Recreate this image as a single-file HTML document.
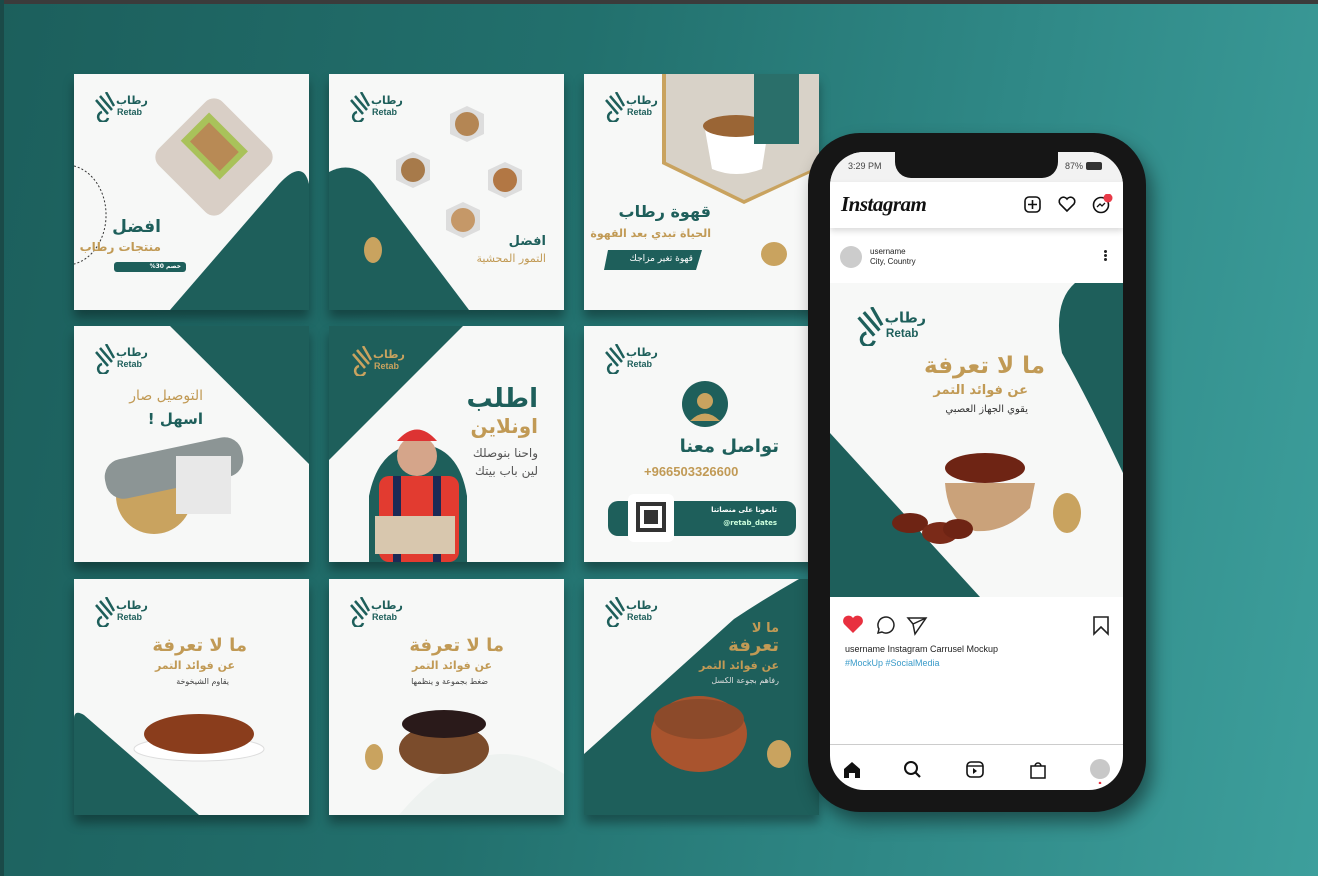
<!DOCTYPE html>
<html><head><meta charset="utf-8"><style>
*{margin:0;padding:0;box-sizing:border-box}
body{width:1318px;height:876px;overflow:hidden;position:relative;background:linear-gradient(100deg,#1c5f5c 0%,#22706d 40%,#2f8886 70%,#3d9f9c 100%);font-family:"Liberation Sans",sans-serif}
.top{position:absolute;left:0;top:0;width:1318px;height:4px;background:#3b3b3b}
.lft{position:absolute;left:0;top:0;width:4px;height:876px;background:#1a4a48}
.card{position:absolute;width:235px;height:236px;background:#f7f8f7;overflow:hidden;box-shadow:0 8px 10px rgba(0,0,0,.35)}
.card svg.bg{position:absolute;left:0;top:0}
.ar{position:absolute;font-family:"DejaVu Sans",sans-serif;direction:rtl;white-space:nowrap;font-weight:bold}
.g{color:#c19a55}.t{color:#1e5f5b}
.logo{position:absolute;width:50px;height:30px}
.logo .r{position:absolute;left:22px;top:2px;font:bold 11px "DejaVu Sans",sans-serif}
.logo .e{position:absolute;left:23px;top:15px;font:bold 9px "Liberation Sans",sans-serif}
</style></head><body>
<div class="top"></div><div class="lft"></div>

<!-- card1 -->
<div class="card" style="left:74px;top:74px">
<svg class="bg" width="235" height="236"><path d="M96,236 L205,110 Q229,84 235,110 L235,236Z" fill="#1e5f5b"/>
<path d="M0,92 A40,50 0 0 1 0,190" fill="none" stroke="#333" stroke-width="1" stroke-dasharray="2 2"/>
<g transform="rotate(45 140 83)"><rect x="95" y="38" width="90" height="90" rx="12" fill="#d9cfc6"/><rect x="105" y="55" width="55" height="40" fill="#a9c25a"/><rect x="112" y="62" width="42" height="27" fill="#b88a55"/></g>
<rect x="40" y="188" width="72" height="10" rx="3" fill="#1e5f5b"/></svg>
<div class="logo t" style="left:20px;top:18px"><svg width="24" height="30"><path d="M2,8 L14,22 M6,4 L18,18 M12,0 L20,14 M8,20 a5,5 0 1 0 6,6" stroke="#1e5f5b" stroke-width="2.5" fill="none"/></svg><span class="r">رطاب</span><span class="e">Retab</span></div>
<div class="ar t" style="right:148px;top:143px;font-size:17px">افضل</div>
<div class="ar g" style="right:148px;top:166px;font-size:12px">منتجات رطاب</div>
<div class="ar" style="right:128px;top:189px;font-size:6px;color:#fff">خصم 30%</div>
</div>

<!-- card2 -->
<div class="card" style="left:329px;top:74px">
<svg class="bg" width="235" height="236"><path d="M0,98 Q25,85 45,110 L140,236 L0,236Z" fill="#1e5f5b"/>
<ellipse cx="44" cy="176" rx="9" ry="13" fill="#c9a35f"/>
<polygon points="138,32 155,40 155,60 138,68 121,60 121,40" fill="#ddd"/><circle cx="138" cy="50" r="12" fill="#b48654"/>
<polygon points="84,78 101,86 101,106 84,114 67,106 67,86" fill="#ddd"/><circle cx="84" cy="96" r="12" fill="#a77a4a"/>
<polygon points="176,88 193,96 193,116 176,124 159,116 159,96" fill="#ddd"/><circle cx="176" cy="106" r="12" fill="#b27744"/>
<polygon points="134,128 151,136 151,156 134,164 117,156 117,136" fill="#ddd"/><circle cx="134" cy="146" r="12" fill="#c59868"/></svg>
<div class="logo t" style="left:20px;top:18px"><svg width="24" height="30"><path d="M2,8 L14,22 M6,4 L18,18 M12,0 L20,14 M8,20 a5,5 0 1 0 6,6" stroke="#1e5f5b" stroke-width="2.5" fill="none"/></svg><span class="r">رطاب</span><span class="e">Retab</span></div>
<div class="ar t" style="right:18px;top:160px;font-size:13px">افضل</div>
<div class="ar g" style="right:18px;top:178px;font-size:11px;font-weight:normal">التمور المحشية</div>
</div>

<!-- card3 -->
<div class="card" style="left:584px;top:74px">
<svg class="bg" width="235" height="236"><path d="M78,0 L235,0 L235,95 L160,130 L78,90Z" fill="#c9a35f"/><path d="M82,0 L235,0 L235,92 L160,126 L82,88Z" fill="#d8d2c8"/>
<path d="M120,50 L185,50 L178,95 Q152,105 128,95Z" fill="#fff"/><ellipse cx="152" cy="52" rx="33" ry="11" fill="#9a6535"/>
<rect x="170" y="0" width="45" height="70" fill="#2a6f6a"/>
<path d="M24,176 L118,176 L112,196 L20,196Z" fill="#1e5f5b"/><ellipse cx="190" cy="180" rx="13" ry="12" fill="#c9a35f"/></svg>
<div class="logo t" style="left:20px;top:18px"><svg width="24" height="30"><path d="M2,8 L14,22 M6,4 L18,18 M12,0 L20,14 M8,20 a5,5 0 1 0 6,6" stroke="#1e5f5b" stroke-width="2.5" fill="none"/></svg><span class="r">رطاب</span><span class="e">Retab</span></div>
<div class="ar t" style="right:108px;top:128px;font-size:16px">قهوة رطاب</div>
<div class="ar g" style="right:108px;top:153px;font-size:11px">الحياة تبدي بعد القهوة</div>
<div class="ar" style="right:126px;top:180px;font-size:9px;color:#fff;font-weight:normal">قهوة تغير مزاجك</div>
</div>

<!-- card4 -->
<div class="card" style="left:74px;top:326px">
<svg class="bg" width="235" height="236"><path d="M96,0 L235,0 L235,138 Z" fill="#1e5f5b"/>
<circle cx="80" cy="170" r="38" fill="#c9a35f"/><rect x="30" y="122" width="140" height="40" rx="18" fill="#8c9595" transform="rotate(-12 100 142)"/><rect x="102" y="130" width="55" height="58" fill="#e8e8e8"/></svg>
<div class="logo t" style="left:20px;top:18px"><svg width="24" height="30"><path d="M2,8 L14,22 M6,4 L18,18 M12,0 L20,14 M8,20 a5,5 0 1 0 6,6" stroke="#1e5f5b" stroke-width="2.5" fill="none"/></svg><span class="r">رطاب</span><span class="e">Retab</span></div>
<div class="ar g" style="right:106px;top:62px;font-size:14px;font-weight:normal">التوصيل صار</div>
<div class="ar t" style="right:106px;top:84px;font-size:15px">اسهل !</div>
</div>

<!-- card5 -->
<div class="card" style="left:329px;top:326px">
<svg class="bg" width="235" height="236"><path d="M0,0 L134,0 L0,134Z" fill="#1e5f5b"/><path d="M40,236 L40,170 Q50,120 90,118 Q130,120 138,170 L138,236Z" fill="#1e5f5b"/>
<rect x="50" y="150" width="80" height="86" rx="10" fill="#e23b30"/><circle cx="88" cy="130" r="20" fill="#d5a58a"/><path d="M68,115 Q88,92 108,115Z" fill="#d33"/>
<rect x="64" y="150" width="8" height="86" fill="#1c2a55"/><rect x="104" y="150" width="8" height="86" fill="#1c2a55"/>
<rect x="46" y="190" width="80" height="38" fill="#d8c7ae"/></svg>
<div class="logo" style="left:22px;top:20px;color:#c9a35f"><svg width="24" height="30"><path d="M2,8 L14,22 M6,4 L18,18 M12,0 L20,14 M8,20 a5,5 0 1 0 6,6" stroke="#c9a35f" stroke-width="2.5" fill="none"/></svg><span class="r">رطاب</span><span class="e">Retab</span></div>
<div class="ar t" style="right:26px;top:58px;font-size:26px">اطلب</div>
<div class="ar g" style="right:26px;top:88px;font-size:20px">اونلاين</div>
<div class="ar" style="right:26px;top:120px;font-size:12px;color:#555;font-weight:normal">واحنا بنوصلك</div>
<div class="ar" style="right:26px;top:138px;font-size:12px;color:#555;font-weight:normal">لين باب بيتك</div>
</div>

<!-- card6 -->
<div class="card" style="left:584px;top:326px">
<svg class="bg" width="235" height="236"><circle cx="121" cy="78" r="23" fill="#1e5f5b"/><circle cx="121" cy="75" r="8" fill="#c9a35f"/><path d="M106,95 Q121,80 136,95Z" fill="#c9a35f"/>
<rect x="24" y="175" width="188" height="35" rx="10" fill="#1e5f5b"/><rect x="44" y="168" width="46" height="48" rx="6" fill="#fff"/><rect x="52" y="176" width="30" height="30" fill="#333"/><rect x="56" y="180" width="22" height="22" fill="#fff"/><rect x="60" y="184" width="14" height="14" fill="#333"/></svg>
<div class="logo t" style="left:20px;top:18px"><svg width="24" height="30"><path d="M2,8 L14,22 M6,4 L18,18 M12,0 L20,14 M8,20 a5,5 0 1 0 6,6" stroke="#1e5f5b" stroke-width="2.5" fill="none"/></svg><span class="r">رطاب</span><span class="e">Retab</span></div>
<div class="ar t" style="right:40px;top:110px;font-size:18px">تواصل معنا</div>
<div class="ar g" style="left:60px;top:138px;font-size:13px;direction:ltr;font-family:'Liberation Sans'">+966503326600</div>
<div class="ar" style="right:42px;top:180px;font-size:7px;color:#fff">تابعونا على منصاتنا</div>
<div class="ar" style="right:42px;top:193px;font-size:7px;color:#cfd;direction:ltr">@retab_dates</div>
</div>

<!-- card7 -->
<div class="card" style="left:74px;top:579px">
<svg class="bg" width="235" height="236"><path d="M0,140 Q0,130 10,136 L125,236 L0,236Z" fill="#1e5f5b"/>
<ellipse cx="125" cy="170" rx="65" ry="12" fill="#fff" stroke="#ddd"/><ellipse cx="125" cy="155" rx="55" ry="20" fill="#8a3d1c"/></svg>
<div class="logo t" style="left:20px;top:18px"><svg width="24" height="30"><path d="M2,8 L14,22 M6,4 L18,18 M12,0 L20,14 M8,20 a5,5 0 1 0 6,6" stroke="#1e5f5b" stroke-width="2.5" fill="none"/></svg><span class="r">رطاب</span><span class="e">Retab</span></div>
<div class="ar g" style="right:62px;top:56px;font-size:18px">ما لا تعرفة</div>
<div class="ar g" style="right:74px;top:80px;font-size:11px">عن فوائد التمر</div>
<div class="ar" style="right:80px;top:98px;font-size:8px;color:#444;font-weight:normal">يقاوم الشيخوخة</div>
</div>

<!-- card8 -->
<div class="card" style="left:329px;top:579px">
<svg class="bg" width="235" height="236"><path d="M70,236 Q150,140 235,195 L235,236Z" fill="#eef2f0"/>
<ellipse cx="115" cy="170" rx="45" ry="25" fill="#7b4c2c"/><ellipse cx="115" cy="145" rx="42" ry="14" fill="#2a1a1a"/><ellipse cx="45" cy="178" rx="9" ry="13" fill="#c9a35f"/></svg>
<div class="logo t" style="left:20px;top:18px"><svg width="24" height="30"><path d="M2,8 L14,22 M6,4 L18,18 M12,0 L20,14 M8,20 a5,5 0 1 0 6,6" stroke="#1e5f5b" stroke-width="2.5" fill="none"/></svg><span class="r">رطاب</span><span class="e">Retab</span></div>
<div class="ar g" style="right:60px;top:56px;font-size:18px">ما لا تعرفة</div>
<div class="ar g" style="right:72px;top:80px;font-size:11px">عن فوائد التمر</div>
<div class="ar" style="right:76px;top:98px;font-size:8px;color:#444;font-weight:normal">ضغط بجموعة و ينظمها</div>
</div>

<!-- card9 -->
<div class="card" style="left:584px;top:579px;background:#1e5f5b">
<svg class="bg" width="235" height="236"><path d="M0,0 L215,0 Q180,20 150,40 L0,175Z" fill="#f7f8f7"/>
<ellipse cx="115" cy="155" rx="48" ry="38" fill="#a9542e"/><ellipse cx="115" cy="140" rx="45" ry="20" fill="#8c4a2a"/><ellipse cx="195" cy="175" rx="12" ry="14" fill="#c9a35f"/></svg>
<div class="logo t" style="left:20px;top:18px"><svg width="24" height="30"><path d="M2,8 L14,22 M6,4 L18,18 M12,0 L20,14 M8,20 a5,5 0 1 0 6,6" stroke="#1e5f5b" stroke-width="2.5" fill="none"/></svg><span class="r">رطاب</span><span class="e">Retab</span></div>
<div class="ar g" style="right:40px;top:42px;font-size:13px">ما لا</div>
<div class="ar g" style="right:40px;top:56px;font-size:18px">تعرفة</div>
<div class="ar g" style="right:40px;top:80px;font-size:11px">عن فوائد التمر</div>
<div class="ar" style="right:40px;top:97px;font-size:8px;color:#ddd;font-weight:normal">رفاهم بجوعة الكسل</div>
</div>

<!-- phone -->
<div style="position:absolute;left:808px;top:133px;width:338px;height:679px;background:#161616;border-radius:52px;box-shadow:6px 10px 18px rgba(0,0,0,.45)"></div>
<div style="position:absolute;left:830px;top:152px;width:293px;height:638px;background:#fff;border-radius:34px;overflow:hidden">
 <div style="position:absolute;left:0;top:0;width:293px;height:30px;background:#f2f2f2"></div>
 <div style="position:absolute;left:65px;top:0;width:163px;height:26px;background:#161616;border-radius:0 0 16px 16px"></div>
 <div style="position:absolute;left:18px;top:9px;font-size:9px;color:#444">3:29 PM</div>
 <div style="position:absolute;left:235px;top:9px;font-size:9px;color:#444">87%</div>
 <div style="position:absolute;left:256px;top:10px;width:16px;height:8px;border:1.5px solid #333;border-radius:2px;background:#333"></div>
 <div style="position:absolute;left:0;top:30px;width:293px;height:46px;background:#fff;box-shadow:0 3px 6px rgba(0,0,0,.15)"></div>
 <div style="position:absolute;left:11px;top:40px;font:italic bold 21px 'Liberation Serif',serif;color:#111;letter-spacing:-.5px">Instagram</div>
 <svg style="position:absolute;left:192px;top:42px" width="100" height="24"><rect x="3" y="3" width="15" height="15" rx="4" fill="none" stroke="#111" stroke-width="1.6"/><path d="M10.5,6v9M6,10.5h9" stroke="#111" stroke-width="1.6"/>
 <path d="M45,17 L38,10 A4,4 0 0 1 45,5 A4,4 0 0 1 52,10Z" fill="none" stroke="#111" stroke-width="1.6"/>
 <circle cx="79" cy="11" r="7.5" fill="none" stroke="#111" stroke-width="1.6"/><path d="M75,13l3-3 2,2 3-3" stroke="#111" stroke-width="1.3" fill="none"/><circle cx="86" cy="4" r="4.5" fill="#e83a48"/></svg>
 <div style="position:absolute;left:10px;top:94px;width:22px;height:22px;border-radius:50%;background:#ccc"></div>
 <div style="position:absolute;left:40px;top:95px;font-size:8px;color:#222">username</div>
 <div style="position:absolute;left:40px;top:105px;font-size:8px;color:#222">City, Country</div>
 <div style="position:absolute;left:274px;top:98px;width:3px;height:3px;background:#222;border-radius:50%;box-shadow:0 4px 0 #222,0 8px 0 #222"></div>
 <div style="position:absolute;left:0;top:131px;width:293px;height:314px;background:#f7f8f7;overflow:hidden">
  <svg width="293" height="314" style="position:absolute;left:0;top:0"><path d="M245,0 L293,0 L293,190 Q260,120 232,70 Q222,20 245,0Z" fill="#1e5f5b"/><path d="M0,150 L150,314 L0,314Z" fill="#1e5f5b"/>
  <path d="M115,200 Q118,240 145,248 Q175,250 200,225 L205,200Z" fill="#caa27a"/><ellipse cx="155" cy="185" rx="40" ry="15" fill="#6e2414"/>
  <ellipse cx="80" cy="240" rx="18" ry="10" fill="#6e2414"/><ellipse cx="110" cy="250" rx="18" ry="11" fill="#7a2a18"/><ellipse cx="128" cy="246" rx="15" ry="10" fill="#6e2414"/>
  <ellipse cx="237" cy="230" rx="14" ry="20" fill="#c9a35f"/></svg>
  <div class="logo t" style="left:26px;top:24px;transform:scale(1.3);transform-origin:0 0"><svg width="24" height="30"><path d="M2,8 L14,22 M6,4 L18,18 M12,0 L20,14 M8,20 a5,5 0 1 0 6,6" stroke="#1e5f5b" stroke-width="2.5" fill="none"/></svg><span class="r">رطاب</span><span class="e">Retab</span></div>
  <div class="ar g" style="right:78px;top:70px;font-size:23px">ما لا تعرفة</div>
  <div class="ar g" style="right:95px;top:100px;font-size:13px">عن فوائد التمر</div>
  <div class="ar" style="right:95px;top:121px;font-size:10px;color:#333;font-weight:normal">يقوي الجهاز العصبي</div>
 </div>
 <svg style="position:absolute;left:12px;top:462px" width="280" height="22"><path d="M11,19 L2,10 A5,5 0 0 1 11,4 A5,5 0 0 1 20,10Z" fill="#e8303f"/>
 <path d="M40,18 L36,19 L37,15 A8,8 0 1 1 40,18Z" fill="none" stroke="#222" stroke-width="1.5"/>
 <path d="M66,4 L84,4 L73,20 L71,10Z M71,10 L84,4" fill="none" stroke="#222" stroke-width="1.5"/>
 <path d="M252,3 L266,3 L266,20 L259,13 L252,20Z" fill="none" stroke="#222" stroke-width="1.6"/></svg>
 <div style="position:absolute;left:15px;top:492px;font-size:9px;color:#222">username Instagram Carrusel Mockup</div>
 <div style="position:absolute;left:15px;top:506px;font-size:9px;color:#3a9bc9">#MockUp #SocialMedia</div>
 <div style="position:absolute;left:0;top:592px;width:293px;height:1px;background:#ccc"></div>
 <svg style="position:absolute;left:10px;top:606px" width="280" height="26"><path d="M4,20 L4,11 L12,4 L20,11 L20,20 L15,20 L15,15 L9,15 L9,20Z" fill="#111"/>
 <circle cx="71" cy="10" r="6" fill="none" stroke="#111" stroke-width="2"/><path d="M75,14 L80,19" stroke="#111" stroke-width="2.2"/>
 <rect x="127" y="4" width="16" height="15" rx="4" fill="none" stroke="#111" stroke-width="1.6"/><path d="M127,8h16" stroke="#111" stroke-width="1.4"/><path d="M133,10v6l4,-3z" fill="#111"/>
 <path d="M191,8h14v12h-14z M195,8 a3,3 0 0 1 6,0" fill="none" stroke="#111" stroke-width="1.5"/>
 <circle cx="260" cy="11" r="10" fill="#c8c8c8"/><circle cx="260" cy="25" r="1.3" fill="#e8303f"/></svg>
</div>
</body></html>
